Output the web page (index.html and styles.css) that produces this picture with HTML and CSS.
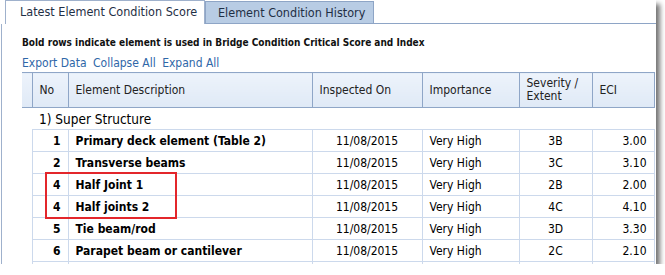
FILE: index.html
```html
<!DOCTYPE html>
<html>
<head>
  <title>Element Condition</title>
  <link rel="stylesheet" href="styles.css">
</head>
<body>

  <div class="window">

    <div class="tabs">
      <div class="tab active">Latest Element Condition Score</div>
      <div class="tab">Element Condition History</div>
      <div class="tab-fill"></div>
    </div>

    <div class="panel">
      <p class="note">Bold rows indicate element is used in Bridge Condition Critical Score and Index</p>
      <div class="links">
        <a href="#">Export Data</a>
        <a href="#">Collapse All</a>
        <a href="#">Expand All</a>
      </div>

      <table class="grid">
        <colgroup>
          <col class="c-pad">
          <col class="c-no">
          <col class="c-desc">
          <col class="c-date">
          <col class="c-imp">
          <col class="c-sev">
          <col class="c-eci">
        </colgroup>
        <thead>
          <tr>
            <th></th>
            <th>No</th>
            <th>Element Description</th>
            <th>Inspected On</th>
            <th>Importance</th>
            <th>Severity /<br>Extent</th>
            <th>ECI</th>
          </tr>
        </thead>
        <tbody>
          <tr class="group">
            <td></td>
            <td colspan="6">1) Super Structure</td>
          </tr>
          <tr class="bold">
            <td></td><td class="no">1</td><td>Primary deck element (Table 2)</td>
            <td class="mid">11/08/2015</td><td>Very High</td><td class="mid">3B</td><td class="num">3.00</td>
          </tr>
          <tr class="bold">
            <td></td><td class="no">2</td><td>Transverse beams</td>
            <td class="mid">11/08/2015</td><td>Very High</td><td class="mid">3C</td><td class="num">3.10</td>
          </tr>
          <tr class="bold">
            <td></td><td class="no">4</td><td>Half Joint 1</td>
            <td class="mid">11/08/2015</td><td>Very High</td><td class="mid">2B</td><td class="num">2.00</td>
          </tr>
          <tr class="bold">
            <td></td><td class="no">4</td><td>Half joints 2</td>
            <td class="mid">11/08/2015</td><td>Very High</td><td class="mid">4C</td><td class="num">4.10</td>
          </tr>
          <tr class="bold">
            <td></td><td class="no">5</td><td>Tie beam/rod</td>
            <td class="mid">11/08/2015</td><td>Very High</td><td class="mid">3D</td><td class="num">3.30</td>
          </tr>
          <tr class="bold">
            <td></td><td class="no">6</td><td>Parapet beam or cantilever</td>
            <td class="mid">11/08/2015</td><td>Very High</td><td class="mid">2C</td><td class="num">2.10</td>
          </tr>
          <tr>
            <td></td><td></td><td></td><td></td><td></td><td></td><td></td>
          </tr>
        </tbody>
      </table>
    </div>

    <div class="highlight"></div>
  </div>

</body>
</html>
```

FILE: styles.css
```css
body{
    margin: 0;
    background: #fff;
    font-family: Tahoma, "DejaVu Sans Condensed", "Liberation Sans", sans-serif;
    font-size: 12px;
    color: #000;
}

.window{
    position: relative;
    width: 656px;
    height: 264px;
    background: #fff;
    overflow: hidden;
    box-shadow: 4px 4px 5px rgba(0, 0, 0, 0.55);
}

.tabs{
    display: flex;
    height: 24px;
    padding-left: 5px;
}

.tab{
    box-sizing: border-box;
    height: 24px;
    line-height: 22px;
    border: 1px solid #9fb1cc;
    border-bottom: none;
    color: #1f2f45;
    font-size: 12.5px;
    white-space: nowrap;
}

.tab.active{
    width: 200px;
    padding-left: 14px;
    background: #fff;
}

.tab + .tab{
    width: 169px;
    margin-top: 1px;
    height: 23px;
    line-height: 21px;
    padding-left: 12px;
    background: #b8cce4;
    border-color: #8ea5c6;
    border-bottom: 1px solid #8ea5c6;
}

.tab-fill{
    flex: 1;
    border-bottom: 1px solid #8ea5c6;
}

.panel{
    margin-left: 1px;
    height: 240px;
    padding-left: 20px;
    border-left: 1px solid #9fb1cc;
}

.note{
    margin: 0;
    padding-top: 13px;
    height: 18px;
    font-size: 10px;
    font-weight: bold;
    color: #111;
    white-space: nowrap;
}

.links{
    height: 17px;
    line-height: 17px;
    font-size: 12px;
}

.links a{
    color: #2f67a8;
    text-decoration: none;
    margin-right: 3px;
}

.grid{
    table-layout: fixed;
    width: 632px;
    border-collapse: collapse;
}

.c-pad{ width: 10px; }
.c-no{ width: 36px; }
.c-desc{ width: 244px; }
.c-date{ width: 110px; }
.c-imp{ width: 97px; }
.c-sev{ width: 73px; }
.c-eci{ width: 62px; }

.grid th{
    height: 34px;
    padding: 0 7px;
    text-align: left;
    font-weight: normal;
    color: #222;
    line-height: 13px;
    background: linear-gradient(#edf3fb, #dfe9f6);
    border: 1px solid #8fa6c7;
}

.grid th:first-child{
    border-left: none;
}

.grid td{
    height: 21px;
    padding: 0 7px;
    border: 1px solid #ccd9ec;
    white-space: nowrap;
    overflow: hidden;
}

.grid td:first-child{
    border: none;
    padding: 0;
}

.grid .group td{
    border-left: none;
    border-right: none;
    border-top: none;
    font-size: 13.5px;
}

.grid .bold td.no,
.grid .bold td:nth-child(3){
    font-weight: bold;
    font-size: 12px;
}

.grid td.no{
    text-align: right;
}

.grid td.mid{
    text-align: center;
}

.grid td.num{
    text-align: right;
}

.highlight{
    position: absolute;
    left: 45px;
    top: 172px;
    width: 128px;
    height: 43px;
    border: 2px solid #e3262b;
}
```
